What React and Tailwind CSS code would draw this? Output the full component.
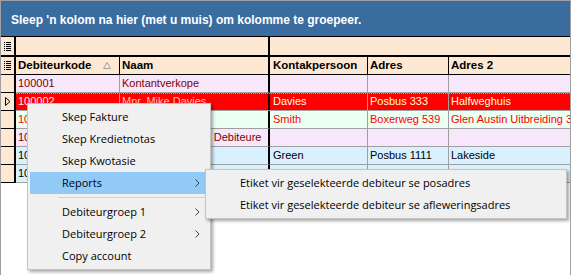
import React from "react";

function ColIcon() {
  return (
    <svg width="7" height="9" viewBox="0 0 7 9" className="block">
      {[0, 2, 4, 6, 8].map((y) => (
        <g key={y}>
          <rect x="0" y={y} width="1" height="1" fill="#000" />
          <rect x="2" y={y} width="5" height="1" fill="#000" />
        </g>
      ))}
    </svg>
  );
}

function SortIcon() {
  return (
    <svg width="8" height="7" viewBox="0 0 8 7" className="block">
      <path d="M4 0.5 L7.5 6.5 L0.5 6.5 Z" fill="none" stroke="#a0a0a0" strokeWidth="1" />
    </svg>
  );
}

function RowArrow() {
  return (
    <svg width="6" height="9" viewBox="0 0 6 9" className="block">
      <path d="M0.5 0.5 L5 4.5 L0.5 8.5 Z" fill="none" stroke="#000" strokeWidth="1" />
    </svg>
  );
}

function Chevron() {
  return (
    <svg width="5" height="8" viewBox="0 0 5 8" className="block">
      <path d="M0.5 0.5 L4 4 L0.5 7.5" fill="none" stroke="#404040" strokeWidth="1" />
    </svg>
  );
}

function DataRow({ bg, colors, cells, selected }) {
  const c = cells;
  return (
    <div className="relative flex h-[18px] text-[11px] leading-[17px]">
      <div className="w-[15px] shrink-0 bg-[#fde9d3] border-r-2 border-b border-black flex items-center justify-center">
        {selected ? <RowArrow /> : null}
      </div>
      <div className={`w-[104px] shrink-0 border-r border-b border-[#a0a0a0] pl-[2px] whitespace-nowrap overflow-hidden ${bg} ${colors[0]}`}>{c[0]}</div>
      <div className={`w-[150px] shrink-0 border-r-2 border-r-black border-b border-b-[#a0a0a0] pl-[2px] whitespace-nowrap overflow-hidden ${bg} ${colors[1]}`}>{c[1]}</div>
      <div className={`w-[98px] shrink-0 border-r border-b border-[#a0a0a0] pl-[3px] whitespace-nowrap overflow-hidden ${bg} ${colors[2]}`}>{c[2]}</div>
      <div className={`w-[81px] shrink-0 border-r border-b border-[#a0a0a0] pl-[2px] whitespace-nowrap overflow-hidden ${bg} ${colors[3]}`}>{c[3]}</div>
      <div className={`flex-1 border-b border-[#a0a0a0] pl-[2px] whitespace-nowrap overflow-hidden ${bg} ${colors[4]}`}>{c[4]}</div>
      {selected ? (
        <div className="absolute left-[15px] right-0 top-0 bottom-0 border-y border-dotted border-[#7fb0c0] pointer-events-none" />
      ) : null}
    </div>
  );
}

function MenuItem({ children, active, arrow }) {
  return (
    <div className={`h-[22px] flex items-center justify-between pl-[32px] pr-[8px] ${active ? "bg-[#91c9f7]" : ""}`}>
      <span>{children}</span>
      {arrow ? <Chevron /> : null}
    </div>
  );
}

export default function App() {
  const maroon = ["text-[#800000]", "text-[#800000]", "text-[#800000]", "text-[#800000]", "text-[#800000]"];
  const red = ["text-[#ff0000]", "text-[#ff0000]", "text-[#ff0000]", "text-[#ff0000]", "text-[#ff0000]"];
  const black = ["text-black", "text-black", "text-black", "text-black", "text-black"];
  const sel = ["text-[#ffe8e8]", "text-[#ffc0c0]", "text-[#fffff0]", "text-[#ffffc8]", "text-[#ffffd8]"];

  return (
    <div className="relative w-[571px] h-[275px] bg-white border-l border-t border-r border-[#a0a0a0] overflow-hidden font-['Liberation_Sans',Arial,sans-serif]">
      <div className="h-[36px] bg-[#3b6ca0] border-b border-black text-white font-bold text-[12px] leading-[14px] pl-[10px] pt-[12px] whitespace-nowrap">
        Sleep 'n kolom na hier (met u muis) om kolomme te groepeer.
      </div>
      <div className="flex h-[20px] bg-[#fde9d3] border-b-2 border-black">
        <div className="w-[15px] shrink-0 border-r-2 border-black flex items-center justify-center">
          <ColIcon />
        </div>
        <div className="w-[254px] shrink-0 border-r-2 border-black" />
        <div className="flex-1" />
      </div>
      <div className="flex h-[18px] bg-[#fde9d3] text-[11.5px] font-bold text-black leading-[17px]">
        <div className="w-[15px] shrink-0 border-r-2 border-b border-black flex items-center justify-center">
          <ColIcon />
        </div>
        <div className="w-[104px] shrink-0 border-r border-b border-black pl-[2px] pr-[8px] flex items-center justify-between">
          <span>Debiteurkode</span>
          <SortIcon />
        </div>
        <div className="w-[150px] shrink-0 border-r-2 border-b border-black pl-[2px]">Naam</div>
        <div className="w-[98px] shrink-0 border-r border-b border-black pl-[3px]">Kontakpersoon</div>
        <div className="w-[81px] shrink-0 border-r border-b border-black pl-[2px]">Adres</div>
        <div className="flex-1 border-b border-black pl-[2px]">Adres 2</div>
      </div>
      <DataRow bg="bg-[#f7e7fb]" colors={maroon} cells={["100001", "Kontantverkope", "", "", ""]} />
      <DataRow bg="bg-[#ff0000]" colors={sel} selected cells={["100002", "Mnr. Mike Davies", "Davies", "Posbus 333", "Halfweghuis"]} />
      <DataRow bg="bg-[#ebfff2]" colors={red} cells={["100003", "Mnr. John Smith", "Smith", "Boxerweg 539", "Glen Austin Uitbreiding 3"]} />
      <DataRow bg="bg-[#f7e7fb]" colors={maroon} cells={["100004", "Afgetrede Kontant Debiteure", "", "", ""]} />
      <DataRow bg="bg-[#d9f0ff]" colors={black} cells={["100005", "Mev. Sarah Green", "Green", "Posbus 1111", "Lakeside"]} />
      <DataRow bg="bg-[#d9f0ff]" colors={black} cells={["100006", "Mnr. Peter Brown", "Brown", "Posbus 222", "Midrand"]} />

      <div className="absolute left-[26px] top-[102px] w-[184px] bg-[#f0f0f0] border border-[#c4c4c4] py-[2px] px-[2px] text-[11px] text-black font-['Open_Sans',sans-serif] shadow-[2px_2px_3px_rgba(0,0,0,0.35)] z-10">
        <MenuItem>Skep Fakture</MenuItem>
        <MenuItem>Skep Kredietnotas</MenuItem>
        <MenuItem>Skep Kwotasie</MenuItem>
        <MenuItem active arrow>Reports</MenuItem>
        <div className="h-[7px] flex items-center pl-[28px]">
          <div className="h-px w-full bg-[#d4d4d4]" />
        </div>
        <MenuItem arrow>Debiteurgroep 1</MenuItem>
        <MenuItem arrow>Debiteurgroep 2</MenuItem>
        <MenuItem>Copy account</MenuItem>
      </div>

      <div className="absolute left-[204px] top-[168px] w-[362px] bg-[#f0f0f0] border border-[#c4c4c4] py-[2px] px-[2px] text-[11px] text-black font-['Open_Sans',sans-serif] shadow-[2px_2px_3px_rgba(0,0,0,0.35)] z-20">
        <MenuItem>Etiket vir geselekteerde debiteur se posadres</MenuItem>
        <MenuItem>Etiket vir geselekteerde debiteur se afleweringsadres</MenuItem>
      </div>
    </div>
  );
}
